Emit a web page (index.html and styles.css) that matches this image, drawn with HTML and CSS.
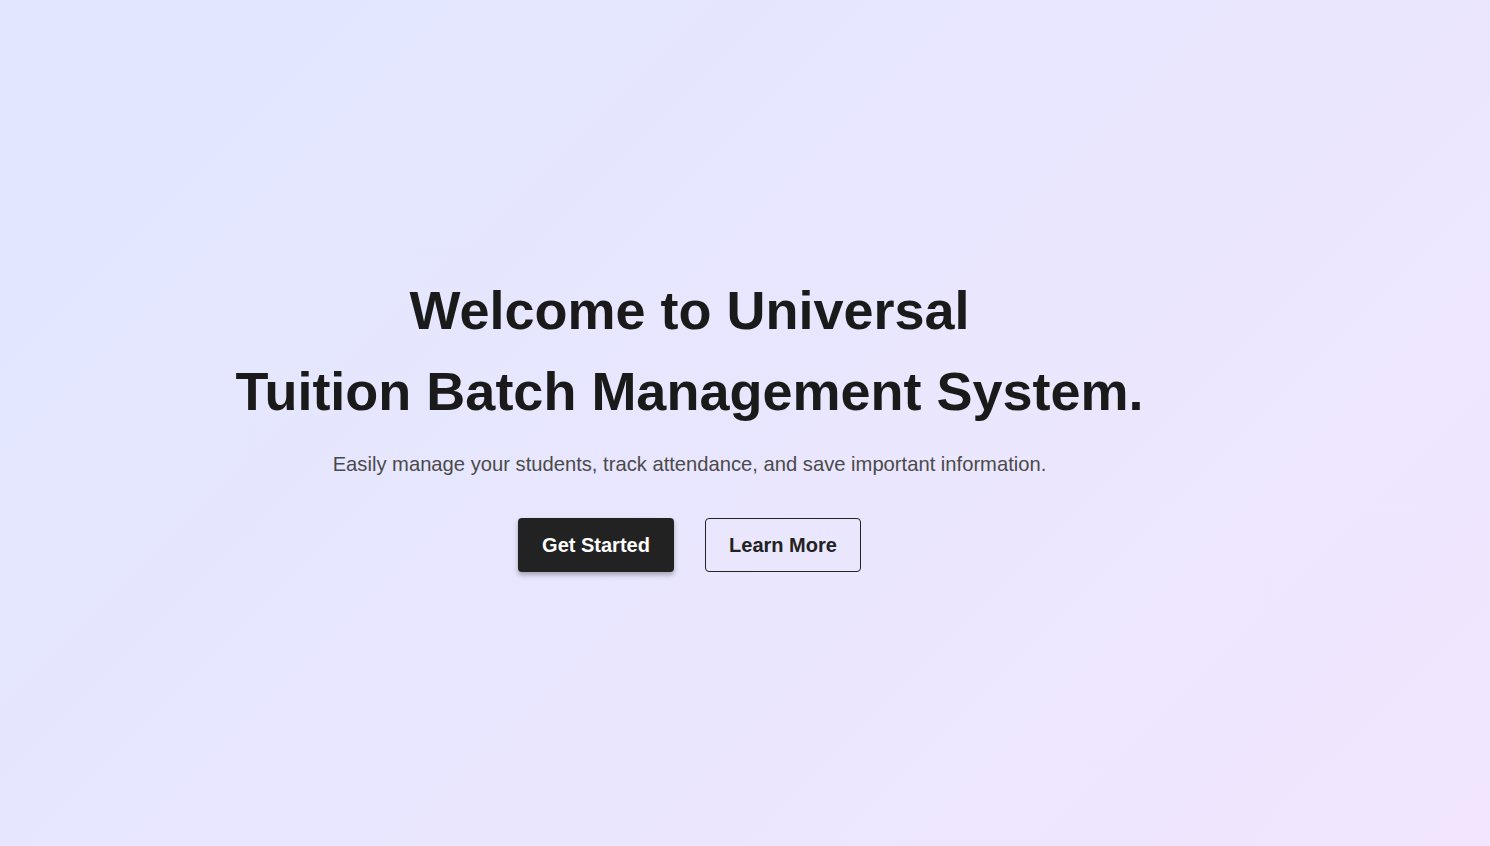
FILE: index.html
```html
<!DOCTYPE html>
<html lang="en">
<head>
<meta charset="utf-8">
<title>Universal Tuition Batch Management System</title>
<link rel="stylesheet" href="styles.css">
</head>
<body>
<main class="hero">
  <div class="hero-inner">
    <h1 class="title">Welcome to Universal<br>Tuition Batch Management System.</h1>
    <p class="subtitle">Easily manage your students, track attendance, and save important information.</p>
    <div class="actions">
      <a class="btn btn-primary" href="#">Get Started</a>
      <a class="btn btn-outline" href="#">Learn More</a>
    </div>
  </div>
</main>
</body>
</html>
```
FILE: styles.css
```css
* { box-sizing: border-box; }
html, body { margin: 0; padding: 0; height: 100%; }
body {
  font-family: "Liberation Sans", Arial, sans-serif;
  background: linear-gradient(135deg, #e0e7ff 0%, #f1e6fe 100%);
  color: #1a1a1a;
}
.hero {
  width: 1379px;
  height: 846px;
  padding-bottom: 4px;
  display: flex;
  align-items: center;
  justify-content: center;
}
.hero-inner {
  display: flex;
  flex-direction: column;
  align-items: center;
  text-align: center;
}
.title {
  margin: 0;
  font-size: 54px;
  line-height: 81px;
  font-weight: 700;
  color: #1a1a1a;
}
.subtitle {
  margin: 18px 0 0;
  font-size: 20.2px;
  line-height: 28px;
  color: #4a4a4a;
}
.actions {
  margin-top: 40px;
  display: flex;
  gap: 31px;
}
.btn {
  display: flex;
  align-items: center;
  justify-content: center;
  width: 156px;
  height: 54px;
  font-size: 20px;
  font-weight: 700;
  text-decoration: none;
  border-radius: 4px;
}
.btn-primary {
  background: #222222;
  color: #ffffff;
  box-shadow: 0 3px 5px rgba(0,0,0,0.3);
}
.btn-outline {
  border: 1px solid #222222;
  color: #222222;
  background: transparent;
}
```
